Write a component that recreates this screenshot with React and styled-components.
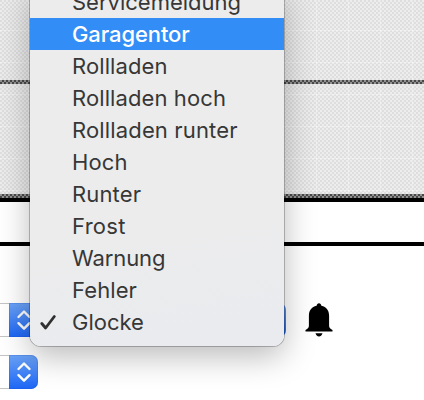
import React from "react";
import styled, { createGlobalStyle } from "styled-components";

const GlobalStyle = createGlobalStyle`
  * { box-sizing: border-box; }
  body { margin: 0; overflow: hidden; background: #fff; }
`;

const Page = styled.main`
  position: relative;
  width: 424px;
  height: 400px;
  overflow: hidden;
  background: #fff;
  font-family: Inter, "Liberation Sans", sans-serif;
`;

const checker = (a, b) => `repeating-conic-gradient(${a} 0 25%, ${b} 0 50%) 0 0 / 4px 4px`;

const Pattern = styled.div`
  height: ${(p) => p.$height}px;
  background:
    repeating-linear-gradient(90deg, rgba(255, 255, 255, 0.3) 0 1px, transparent 1px 32px) 28px 0 / 32px 100%,
    repeating-linear-gradient(180deg, rgba(255, 255, 255, 0.3) 0 1px, transparent 1px 32px) 0 ${(p) => p.$seam}px / 100% 32px,
    ${checker("#ededed", "#dedede")};
`;

const PatternRule = styled.div`
  height: 4px;
  background: ${checker("#484848", "#929292")};
`;

const Rule = styled.div`
  height: 4px;
  background: #000;
`;

const Band = styled.div`
  height: 40px;
`;

const Form = styled.section`
  display: grid;
  gap: 18px;
  padding-top: 57px;
`;

const FormRow = styled.div`
  display: flex;
  height: 34px;
`;

const Select = styled.div`
  display: flex;
  justify-content: flex-end;
  width: ${(p) => p.$width}px;
  margin-left: ${(p) => p.$gap || 0}px;
  border: 1px solid #c4c4c4;
  border-left: 0;
  border-right: 0;
  border-radius: 0 8px 8px 0;
  background: #fff;
`;

const Stepper = styled.span`
  display: flex;
  align-items: center;
  justify-content: center;
  width: 29px;
  height: 34px;
  margin-top: -1px;
  border-radius: 0 7px 7px 0;
  background: linear-gradient(#6ba3f7, #1d66f5);
  box-shadow: inset 0 0 0 1px rgba(30, 80, 200, 0.2);
`;

const BellBox = styled.span`
  display: flex;
  margin-left: 19px;
`;

const Menu = styled.ul`
  position: absolute;
  top: -14px;
  left: 30px;
  width: 254px;
  height: 360px;
  margin: 0;
  padding: 0;
  list-style: none;
  border-radius: 11px;
  background: linear-gradient(170deg, #ececec 62%, #e9ebef);
  box-shadow: 0 0 0 1px rgba(0, 0, 0, 0.24), 0 10px 32px rgba(0, 0, 0, 0.28);
`;

const Option = styled.li`
  display: flex;
  align-items: center;
  height: 32px;
  padding-left: 6px;
  color: ${(p) => (p.$active ? "#fff" : "#373737")};
  background: ${(p) => (p.$active ? "#338df7" : "transparent")};
  font-size: 22px;
  line-height: 32px;
  white-space: nowrap;
`;

const Mark = styled.span`
  display: flex;
  align-items: center;
  width: 36px;
  height: 32px;
`;

const Label = styled.span`
  letter-spacing: ${(p) => p.$tracking}px;
  font-weight: ${(p) => (p.$strong ? 500 : 400)};
`;

const Arrows = () => (
  <Stepper>
    <svg width="16" height="22" viewBox="0 0 16 22" fill="none" stroke="#fff" strokeWidth="2.400" strokeLinecap="round" strokeLinejoin="round">
      <path d="M2.500 8 8 2.500 13.500 8M2.500 14.200 8 19.700 13.500 14.200" />
    </svg>
  </Stepper>
);

const Check = () => (
  <svg width="20" height="18" viewBox="0 0 20 18" fill="none" stroke="#303030" strokeWidth="2.800" strokeLinecap="round" strokeLinejoin="round">
    <path d="M5.800 10.500 9.600 15 18.300 3.500" />
  </svg>
);

const Bell = () => (
  <svg width="28" height="34" viewBox="0 0 28 34">
    <path d="M14 .2c1.300 0 2.100.9 2.400 2.600 5 1.200 7.700 4.700 7.700 9.900v9.800c0 2.300.9 3.200 3.400 4.500V28.600H.5V27c2.500-1.300 3.400-2.200 3.400-4.500v-9.800c0-5.200 2.700-8.700 7.700-9.900C11.900 1.100 12.700.2 14 .2ZM10.500 30.300h7c-.5 2-1.700 3.100-3.500 3.100s-3-1.100-3.500-3.100Z" />
  </svg>
);

const options = [
  { label: "Servicemeldung", tracking: 0 },
  { label: "Garagentor", active: true, tracking: -0.1 },
  { label: "Rollladen", tracking: 0.1 },
  { label: "Rollladen hoch", tracking: 0.1 },
  { label: "Rollladen runter", tracking: 0.15 },
  { label: "Hoch", tracking: 0.1 },
  { label: "Runter", tracking: 0.15 },
  { label: "Frost", tracking: 0.3 },
  { label: "Warnung", tracking: -0.1 },
  { label: "Fehler", tracking: 0.1 },
  { label: "Glocke", checked: true, tracking: 0 },
];

export default function App() {
  return (
    <Page>
      <GlobalStyle />
      <Pattern $height={80} $seam={30} />
      <PatternRule />
      <Pattern $height={110} $seam={10} />
      <PatternRule />
      <Rule />
      <Band />
      <Rule />
      <Form>
        <FormRow>
          <Select $width={38}><Arrows /></Select>
          <Select $width={240} $gap={8}><Arrows /></Select>
          <BellBox><Bell /></BellBox>
        </FormRow>
        <FormRow>
          <Select $width={38}><Arrows /></Select>
        </FormRow>
      </Form>
      <Menu>
        {options.map((o) => (
          <Option key={o.label} $active={o.active}>
            <Mark>{o.checked && <Check />}</Mark>
            <Label $tracking={o.tracking} $strong={o.active}>{o.label}</Label>
          </Option>
        ))}
      </Menu>
    </Page>
  );
}
